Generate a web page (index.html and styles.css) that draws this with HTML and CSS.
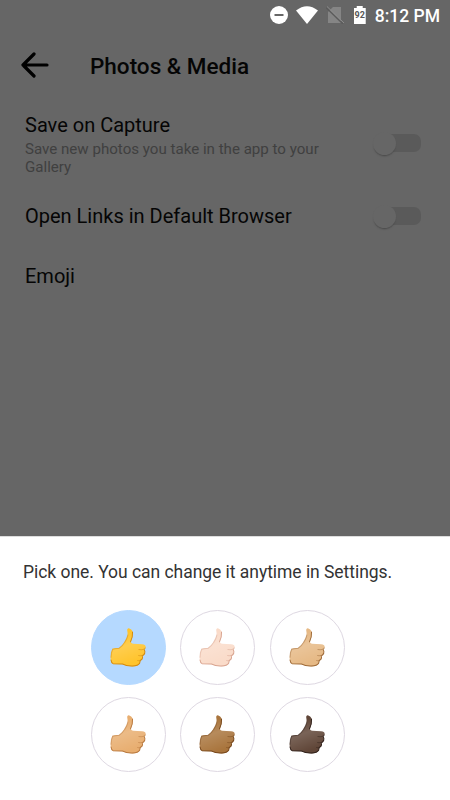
FILE: index.html
```
<!DOCTYPE html>
<html lang="en">
    <head>
        <meta charset="utf-8">
        <meta name="viewport" content="width=device-width, initial-scale=1.0">
        <title>Photos &amp; Media</title>
        <link rel="stylesheet" href="styles.css">
    </head>
    <body>
        <svg class="defs" width="0" height="0">
            <defs>
                <linearGradient id="light" x1="0" y1="0" x2="0.35" y2="1">
                    <stop offset="0.25" stop-color="#fff" stop-opacity="0"/>
                    <stop offset="0.55" stop-color="#fff" stop-opacity="0.16"/>
                    <stop offset="1" stop-color="#fff" stop-opacity="0"/>
                </linearGradient>
                <symbol id="thumb" viewBox="75 68 110 122">
                    <path class="skin" d="M126 76Q129 70 134 73Q143 77 143 89Q142 99 137 112Q137 117 143 118L170 119Q181 119 181 127Q181 133 177 136Q180 141 178 147Q176 152 171 154Q173 160 170 164L165 168Q165 178 158 182Q151 186 138 185Q123 185 113 179L84 178Q76 172 77 157Q77 143 82 133Q91 130 101 131Q110 125 117 114Q124 104 127 94Q128 86 126 76Z"/>
                    <path fill="url(#light)" d="M126 76Q129 70 134 73Q143 77 143 89Q142 99 137 112Q137 117 143 118L170 119Q181 119 181 127Q181 133 177 136Q180 141 178 147Q176 152 171 154Q173 160 170 164L165 168Q165 178 158 182Q151 186 138 185Q123 185 113 179L84 178Q76 172 77 157Q77 143 82 133Q91 130 101 131Q110 125 117 114Q124 104 127 94Q128 86 126 76Z"/>
                    <path class="edge" d="M78 166Q79 175 84 177L112 178Q123 184 138 184Q158 185 163 176L165 168L170 164Q173 160 171 154Q176 152 178 147Q180 141 177 136M142 83Q143 98 136 112"/>
                    <path class="crease" d="M180 130Q178 137 161 135M178 147Q174 155 160 153M170 164Q166 169 157 168M78 158Q78 144 83 134Q92 131 101 132Q113 124 119 113Q126 102 128 92"/>
                </symbol>
            </defs>
        </svg>

        <div class="settings">
            <div class="status-bar">
                <svg class="dnd" viewBox="0 0 18 18"><circle cx="9" cy="9" r="9" fill="#fff"/><path d="M4.5 9h9" stroke="#666" stroke-width="2"/></svg>
                <svg class="wifi" viewBox="0 0 22 18"><path d="M0 4.5Q11-4 22 4.5L11 18Z" fill="#fff"/></svg>
                <svg class="sim" viewBox="0 0 18 18"><path d="M7 1H15V17H2V6Z" fill="#858585"/><path d="M0 1.5L17 18" stroke="#5c5c5c" stroke-width="1.4"/><path d="M1 .5L18 17" stroke="#8c8c8c" stroke-width="1"/></svg>
                <div class="battery">92</div>
                <div class="clock">8:12 PM</div>
            </div>
            <div class="header">
                <svg class="back" viewBox="0 0 28 26"><path d="M13 2L2 13L13 24M2 13H26" fill="none" stroke="#000" stroke-width="3.2" stroke-linecap="round" stroke-linejoin="round"/></svg>
                <h1>Photos &amp; Media</h1>
            </div>
            <div class="row capture">
                <div>
                    <div class="label">Save on Capture</div>
                    <p class="hint">Save new photos you take in the app to your Gallery</p>
                </div>
                <div class="switch"><span></span></div>
            </div>
            <div class="row links">
                <div class="label">Open Links in Default Browser</div>
                <div class="switch"><span></span></div>
            </div>
            <div class="row">
                <div class="label">Emoji</div>
            </div>
        </div>

        <div class="sheet">
            <p class="prompt">Pick one. You can change it anytime in Settings.</p>
            <div class="choices">
                <div class="choice selected yellow"><svg><use href="#thumb"/></svg></div>
                <div class="choice light"><svg><use href="#thumb"/></svg></div>
                <div class="choice medium-light"><svg><use href="#thumb"/></svg></div>
                <div class="choice medium"><svg><use href="#thumb"/></svg></div>
                <div class="choice medium-dark"><svg><use href="#thumb"/></svg></div>
                <div class="choice dark"><svg><use href="#thumb"/></svg></div>
            </div>
        </div>
    </body>
</html>
```
FILE: styles.css
```
body {
    margin: 0;
    width: 450px;
    height: 800px;
    overflow: hidden;
    display: flex;
    flex-direction: column;
    font-family: Roboto, "Liberation Sans", sans-serif;
    background: #fff;
}

h1, p {
    margin: 0;
}

svg {
    display: block;
    flex: none;
}

.defs {
    position: absolute;
}

.settings {
    height: 536px;
    flex: none;
    background: #666;
    color: #050505;
}

.status-bar {
    height: 30px;
    display: flex;
    align-items: center;
    justify-content: flex-end;
    padding-right: 10px;
    color: #fff;
}

.dnd {
    width: 18px;
    height: 18px;
    margin-right: 8px;
}

.wifi {
    width: 22px;
    height: 18px;
    margin-right: 8px;
}

.sim {
    width: 18px;
    height: 18px;
    margin-right: 10px;
}

.battery {
    width: 12px;
    height: 18px;
    margin-right: 9px;
    background: #fff;
    color: #555;
    font-size: 9px;
    font-weight: 700;
    line-height: 19px;
    text-align: center;
    clip-path: polygon(0 2px, 3px 2px, 3px 0, 9px 0, 9px 2px, 100% 2px, 100% 100%, 0 100%);
}

.clock {
    padding-top: 2px;
    font-size: 17.5px;
    font-weight: 500;
    line-height: 28px;
}

.header {
    height: 70px;
    display: flex;
    align-items: center;
    padding-left: 21px;
}

.back {
    width: 28px;
    height: 26px;
    margin-right: 41px;
}

h1 {
    padding-top: 2px;
    font-size: 22.5px;
    font-weight: 500;
}

.row {
    display: flex;
    align-items: center;
    justify-content: space-between;
    height: 60px;
    padding: 0 29px 0 25px;
}

.capture {
    height: 86px;
}

.label {
    font-size: 20px;
    line-height: 24px;
}

.capture .label {
    padding-top: 2px;
    margin-bottom: 3px;
}

.hint {
    width: 310px;
    font-size: 15.1px;
    line-height: 18px;
    color: #404040;
}

.switch {
    width: 48px;
    height: 18px;
    flex: none;
    display: flex;
    align-items: center;
    background: linear-gradient(#5a5a5a, #5a5a5a) right center / 36px 18px no-repeat;
    border-radius: 0 7px 7px 0;
}

.switch span {
    width: 23px;
    height: 23px;
    flex: none;
    border-radius: 50%;
    background: #666;
    box-shadow: 0 2px 2px -1px #444;
}

.sheet {
    flex: 1;
    border-top: 1px solid #ddd;
    box-sizing: border-box;
    padding-top: 23px;
}

.prompt {
    padding-left: 23px;
    font-size: 17.5px;
    letter-spacing: -0.04px;
    line-height: 24px;
    color: #333;
}

.choices {
    display: grid;
    grid-template-columns: repeat(3, 75px);
    gap: 12.5px 14.5px;
    padding: 25.5px 0 0 90.5px;
}

.choice {
    width: 75px;
    height: 75px;
    box-sizing: border-box;
    display: flex;
    align-items: center;
    justify-content: center;
    border: 1px solid #ded8e2;
    border-radius: 50%;
}

.choice svg {
    width: 37px;
    height: 41px;
}

.selected {
    background: #b5d9ff;
    border-color: #b5d9ff;
}

.skin {
    fill: var(--skin);
}

.edge, .crease {
    fill: none;
    stroke: var(--edge);
    stroke-width: 3;
    stroke-linecap: round;
}

.crease {
    opacity: 0.5;
}

.yellow {
    --skin: #ffc42c;
    --edge: #d48a10;
}

.light {
    --skin: #fadbc9;
    --edge: #d9a591;
}

.medium-light {
    --skin: #e6b985;
    --edge: #a06c3a;
}

.medium {
    --skin: #e8ae70;
    --edge: #b97a40;
}

.medium-dark {
    --skin: #a9753d;
    --edge: #79491d;
}

.dark {
    --skin: #604638;
    --edge: #33231d;
}
```
